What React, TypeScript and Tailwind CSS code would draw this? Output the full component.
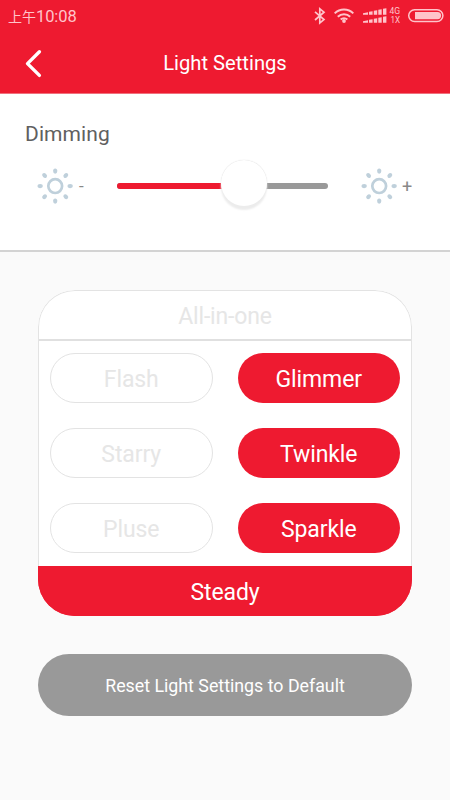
import clsx from "clsx";

const modes = [
  { label: "Flash", active: false },
  { label: "Glimmer", active: true },
  { label: "Starry", active: false },
  { label: "Twinkle", active: true },
  { label: "Pluse", active: false },
  { label: "Sparkle", active: true },
];

const rays = [0, 45, 90, 135, 180, 225, 270, 315];

function SunIcon() {
  return (
    <svg viewBox="-18 -18 36 36" className="h-9 w-9 shrink-0" fill="#bfd0db">
      <circle cx="0.2" cy="0.1" r="6.9" fill="none" stroke="#bfd0db" strokeWidth="2.7" />
      {rays.map((deg) => (
        <ellipse key={deg} cx="0" cy="-15" rx="2.1" ry="2.7" transform={`translate(0.2 0.1) rotate(${deg})`} />
      ))}
    </svg>
  );
}

function StatusIcons() {
  return (
    <svg viewBox="0 0 140 32" className="h-8 w-[140px] shrink-0" fill="#ffc4ca">
      {/* bluetooth */}
      <path d="M5 11.8 14 19.6 9.8 23V8.8L14 12.2 5 20" fill="none" stroke="#ffc4ca" strokeWidth="1.7" />
      {/* wifi */}
      <g fill="none" stroke="#ffc4ca" strokeWidth="2">
        <path d="M24.7 13.4a13.2 13.2 0 0 1 18.6 0" />
        <path d="M27.8 16.7a8.8 8.8 0 0 1 12.4 0" />
        <path d="M30.7 19.5a4.7 4.7 0 0 1 6.6 0" />
      </g>
      <circle cx="34" cy="21" r="1.9" />
      {/* dual sim signal */}
      {[14.8, 22.8].map((y) => (
        <path
          key={y}
          d={`M53 ${y}v-1.6l5-1V${y}zM59 ${y}v-3l3.6-.6V${y}zM63.8 ${y}v-4l3.4-.6V${y}zM68.3 ${y}v-5l3.4-.6V${y}zM73 ${y}v-6l3.4-.6V${y}z`}
        />
      ))}
      <text x="79.4" y="14" fontSize="8.4" textLength="10.6" lengthAdjust="spacingAndGlyphs">4G</text>
      <text x="80.4" y="22.8" fontSize="8.4" textLength="9.6" lengthAdjust="spacingAndGlyphs">1X</text>
      {/* battery */}
      <rect x="98.7" y="9.7" width="34.2" height="11.8" rx="5.9" fill="none" stroke="#ffc4ca" strokeWidth="1.5" />
      <path d="M105 12h22.5a3.6 3.6 0 0 1 0 7.2H105z" />
    </svg>
  );
}

function ModeButton({ label, active }: { label: string; active: boolean }) {
  return (
    <button
      className={clsx(
        "h-[50px] rounded-full text-[23px] tracking-[-0.1px] pt-1",
        active ? "bg-[#ee1a30] text-white" : "border border-[#e3e3e3] bg-white text-[#e6e6e6]"
      )}
    >
      {label}
    </button>
  );
}

export default function App() {
  return (
    <div className="h-[800px] w-[450px] overflow-hidden bg-[#fafafa] font-[Roboto,'Noto_Sans_CJK_SC',sans-serif]">
      <header className="h-[94px] border-b border-[#f0707d] bg-[#ee1a30] text-white">
        <div className="flex h-8 items-center justify-between pl-2">
          <span className="flex items-center pt-0.5 text-[14px] text-[#ffc4ca]">
            上午<span className="text-[16.5px] tracking-[-0.1px]">10:08</span>
          </span>
          <StatusIcons />
        </div>
        <div className="grid h-[61px] grid-cols-[60px_1fr_60px] items-center">
          <button className="pl-6">
            <svg viewBox="0 0 20 30" className="h-[30px] w-5" fill="none" stroke="white" strokeWidth="3.4">
              <path d="M15.4 2.7 3.5 14.6l11.9 11.8" strokeLinecap="round" strokeLinejoin="round" />
            </svg>
          </button>
          <h1 className="text-center text-[20.2px] leading-[63px]">Light Settings</h1>
        </div>
      </header>

      <section className="h-[158px] border-b-2 border-[#d3d3d3] bg-white pt-[25px]">
        <h2 className="pl-[25px] text-[21px] leading-[30px] tracking-[0.1px] text-[#606060]">Dimming</h2>
        <div className="mt-3 flex h-[50px] items-center pl-[37px] text-[#888]">
          <SunIcon />
          <span className="w-11 pt-0.5 pl-1.5 text-[17px]">-</span>
          <div className="relative h-1.5 w-[211px] rounded-full bg-[#999]">
            <div className="h-full w-[127px] rounded-l-full bg-[#ee1a30]" />
            <div className="absolute -top-[23px] left-[104px] size-[46px] rounded-full bg-white shadow-[0_4px_2px_#ececec,0_0_1px_#ccc]" />
          </div>
          <div className="ml-[33px] flex items-center">
            <SunIcon />
            <span className="pt-px pl-[5px] text-[18px]">+</span>
          </div>
        </div>
      </section>

      <main className="px-[38px] pt-[38px]">
        <div className="h-[326px] overflow-hidden rounded-[37px] bg-white bg-[linear-gradient(#ee1a30,#ee1a30)] bg-[length:100%_50px] bg-bottom bg-no-repeat">
          <div className="h-[276px] rounded-t-[37px] border border-b-0 border-[#e3e3e3] bg-white">
            <button className="block h-[50px] w-full border-b-2 border-[#e0e0e0] pt-1 text-[23px] tracking-[-0.15px] text-[#e6e6e6]">
              All-in-one
            </button>
            <div className="grid grid-cols-2 gap-[25px] px-[11px] pt-3">
              {modes.map((mode) => (
                <ModeButton key={mode.label} {...mode} />
              ))}
            </div>
          </div>
          <button className="block h-[50px] w-full bg-[#ee1a30] pt-1 text-[23px] tracking-[-0.1px] text-white">
            Steady
          </button>
        </div>
        <button className="mt-[38px] h-[62px] w-full rounded-full bg-[#999] pt-[3px] text-[17.8px] text-white">
          Reset Light Settings to Default
        </button>
      </main>
    </div>
  );
}
